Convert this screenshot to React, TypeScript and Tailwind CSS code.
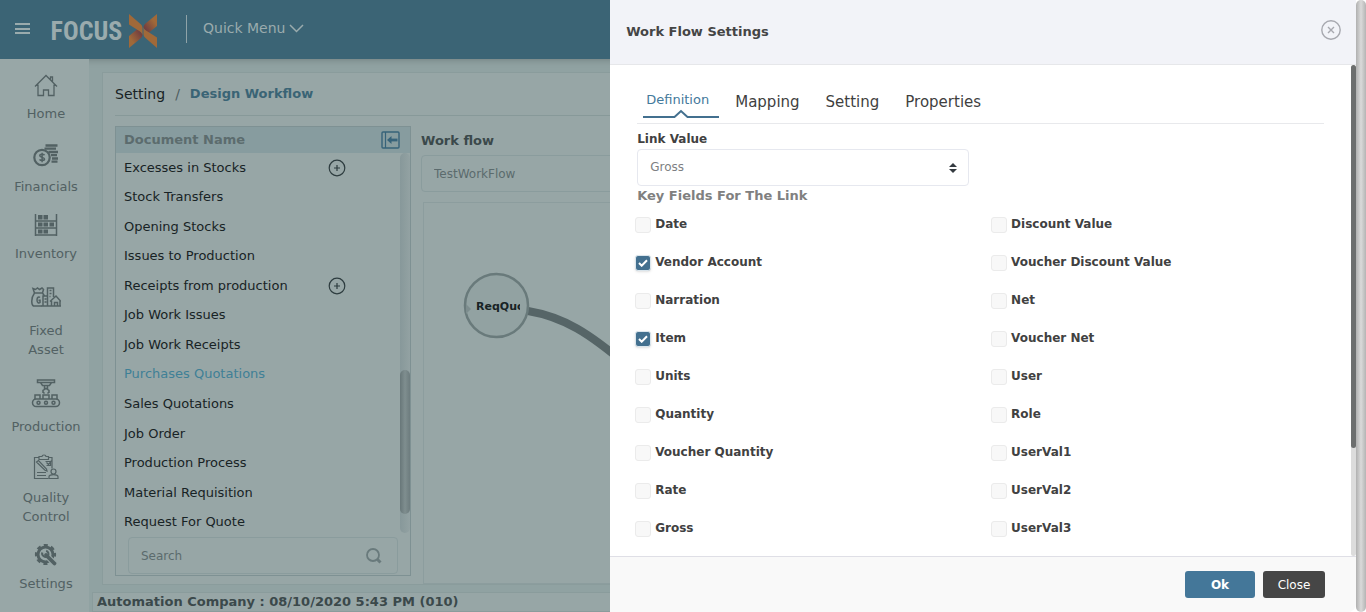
import { useState } from 'react';
import type { ReactNode } from 'react';

const documents = [
  { name: 'Excesses in Stocks', expandable: true },
  { name: 'Stock Transfers' },
  { name: 'Opening Stocks' },
  { name: 'Issues to Production' },
  { name: 'Receipts from production', expandable: true },
  { name: 'Job Work Issues' },
  { name: 'Job Work Receipts' },
  { name: 'Purchases Quotations', active: true },
  { name: 'Sales Quotations' },
  { name: 'Job Order' },
  { name: 'Production Process' },
  { name: 'Material Requisition' },
  { name: 'Request For Quote' },
];

const leftFields = ['Date', 'Vendor Account', 'Narration', 'Item', 'Units', 'Quantity', 'Voucher Quantity', 'Rate', 'Gross'];
const rightFields = ['Discount Value', 'Voucher Discount Value', 'Net', 'Voucher Net', 'User', 'Role', 'UserVal1', 'UserVal2', 'UserVal3'];

function HomeIcon() {
  return (
    <svg width="24" height="24" viewBox="0 0 24 24" fill="none" stroke="currentColor" strokeWidth="1.3" aria-hidden="true">
      <path d="M1 12.500 12 1.500l11 11M4 10.500v11h5.500v-5.500h5v5.500H20V10.500M16.500 5.500V3h2V8" />
    </svg>
  );
}

function FinancialsIcon() {
  return (
    <svg width="26" height="24" viewBox="0 0 26 24" fill="none" stroke="currentColor" aria-hidden="true">
      <path d="M12.500 2.500h12M11.500 5.700h11.500M15.500 9h9.500M18 12.200h6M19 15.500h6M18.500 18.700h6" strokeWidth="2.300" />
      <circle cx="9" cy="14.500" r="7.700" strokeWidth="2.200" />
      <path d="M11.500 12.200c-.5-1.200-4.700-1.500-4.700.5s4.700 1.300 4.700 3.400-4.300 1.800-4.900.3M9.100 9.700v9.600" strokeWidth="1.500" />
    </svg>
  );
}

function InventoryIcon() {
  return (
    <svg width="24" height="24" viewBox="0 0 24 24" fill="none" stroke="currentColor" aria-hidden="true">
      <path d="M1.500 1v22M22.500 1v22M1 8h22M1 15h22M1 22h22" strokeWidth="1.500" />
      <path d="M4 2h4.500v4.500H4zM9.500 2H14v4.500H9.500zM4 9.500h4.500v4H4zM9.500 9.500H14v4H9.500zM15.500 9.500H20v4h-4.500zM4 16.500h4.500v4H4zM9.500 16.500H14v4H9.500z" fill="currentColor" stroke="none" />
    </svg>
  );
}

function AssetIcon() {
  return (
    <svg width="30" height="22" viewBox="0 0 30 22" fill="none" stroke="currentColor" strokeWidth="1.500" aria-hidden="true">
      <path d="M3.500 7 2 2.500l2.500 1L6.500 2l2 1.500L11 2l1.500 1.500-1 3.500zM3.500 7C-.5 12.500.5 19 2.500 20h8M11.500 7l2 3M9 11.500c-1-1-3-.5-3 2.500s2 3.500 3 2.500v-2.200H7.500" />
      <path d="M12 20V10h4.500M16.500 20V2h6v9M18.500 4.500h2M18.500 7.500h2M18.500 10.500h1M13.500 13h2M13.500 16h2M19 15.500l6-5.500 5 5.500M20.500 15v5H29v-5M23.500 20v-3.500h3V20M10 20h20" />
    </svg>
  );
}

function ProductionIcon() {
  return (
    <svg width="30" height="30" viewBox="0 0 30 30" fill="none" stroke="currentColor" strokeWidth="1.500" aria-hidden="true">
      <path d="M6.500 2h17v2.500h-17zM9.500 4.500l2 3h7l2-3M13.500 7.500v3h3v-3M12 15v-2.500l3-2 3 2V15M12 14l1.500 1.500M18 14l-1.500 1.500M4 21v-4h5v4M12 21v-4h6v4M21 21v-4h5v4" />
      <rect x="1.500" y="21" width="27" height="7.500" rx="3.700" />
      <circle cx="7.500" cy="24.700" r="1.500" />
      <circle cx="15" cy="24.700" r="1.500" />
      <circle cx="22.500" cy="24.700" r="1.500" />
    </svg>
  );
}

function QualityIcon() {
  return (
    <svg width="26" height="26" viewBox="0 0 26 26" fill="none" stroke="currentColor" strokeWidth="1.200" aria-hidden="true">
      <path d="M6 3.500H1.500v21h14M15.500 3.500H19v11M6 5.500v-3h3C9 .5 13 .5 13 2.500h2.500v3zM3.500 8l2-1.500 8 8.500.5 2-2-.8zM12.500 7.500h5v4h-4M13.500 8.500l2 2 3-4M4 18.500h9M4 21.500h9" />
      <circle cx="20.500" cy="17.500" r="2.500" />
      <path d="M16 24.500v-1.700c0-3 9-3 9 0v1.700z" />
    </svg>
  );
}

function SettingsIcon() {
  return (
    <svg width="24" height="24" viewBox="0 0 24 24" fill="none" stroke="currentColor" aria-hidden="true">
      <circle cx="11.500" cy="11.500" r="7.500" strokeWidth="3" />
      <circle cx="11.500" cy="11.500" r="9.300" strokeWidth="2.600" strokeDasharray="4 3.304" strokeDashoffset="2" />
      <path d="M14 14l7 7" stroke="#98a7a7" strokeWidth="6" />
      <path d="M12 12l8.500 8.500" strokeWidth="3.800" strokeLinecap="round" />
      <path d="M8.200 9.500a3.600 3.600 0 0 0 5.500 3.800 3.600 3.600 0 0 0-1.500-5.600" strokeWidth="2" />
    </svg>
  );
}

const modules: { label: string; box: string; icon: ReactNode }[] = [
  { label: 'Home', box: 'h-6.5', icon: <HomeIcon /> },
  { label: 'Financials', box: 'h-[34px]', icon: <FinancialsIcon /> },
  { label: 'Inventory', box: 'h-7', icon: <InventoryIcon /> },
  { label: 'Fixed Asset', box: 'h-[38px]', icon: <AssetIcon /> },
  { label: 'Production', box: 'h-[38px]', icon: <ProductionIcon /> },
  { label: 'Quality Control', box: 'h-8', icon: <QualityIcon /> },
  { label: 'Settings', box: 'h-7', icon: <SettingsIcon /> },
];

function TopBar() {
  return (
    <header className="flex h-[59px] shrink-0 items-center bg-[#3b6475] pb-0.5 text-[#9aabad] shadow-md">
      <button type="button" aria-label="Toggle menu" className="ml-[15px] flex h-[11px] w-[15px] flex-col justify-between">
        <span className="h-0.5 w-full bg-current" />
        <span className="h-0.5 w-full bg-current" />
        <span className="h-0.5 w-full bg-current" />
      </button>
      <a href="#home" className="ml-5 flex items-center gap-1.5 pt-1">
        <span className="w-[73px] text-center font-['Liberation_Sans_Narrow','Roboto_Condensed','Liberation_Sans',sans-serif] text-[26px] leading-9 font-bold">FOCUS</span>
        <svg width="28" height="34" viewBox="0 0 28 34" aria-hidden="true">
          <defs>
            <linearGradient id="armTop" x1="0" x2="1" y1="1" y2="0">
              <stop offset="0.150" stopColor="#713d40" />
              <stop offset="0.700" stopColor="#a06939" />
            </linearGradient>
            <linearGradient id="armBottom" x1="1" x2="0" y1="0" y2="1">
              <stop offset="0.150" stopColor="#713d40" />
              <stop offset="0.700" stopColor="#a06939" />
            </linearGradient>
          </defs>
          <path d="M28 0v12l-8.500 7L14.500 14c0-2 .5-3 2-4.500z" fill="url(#armTop)" />
          <path d="M14.500 12.500c.3 2 1 3 2.500 4L28 23.500V34L16.500 24c-1.500-1.500-2-2.500-2-4.500z" fill="#a06939" />
          <path d="M0 34V22l8.500-7 5 5c0 2-.5 3-2 4.500z" fill="url(#armBottom)" />
          <path d="M13.500 21.500c-.3-2-1-3-2.500-4L0 10.500V0l11.500 10c1.500 1.500 2 2.500 2 4.500z" fill="#a06939" />
        </svg>
      </a>
      <span className="ml-[29px] h-7 w-px bg-[#8fa3a8]" />
      <button type="button" className="ml-4 flex items-center gap-1 text-[14px]">
        Quick Menu
        <svg width="15" height="9" viewBox="0 0 15 9" fill="none" stroke="currentColor" strokeWidth="1.500" aria-hidden="true">
          <path d="M1 1l6.500 6.500L14 1" />
        </svg>
      </button>
    </header>
  );
}

function Sidebar() {
  return (
    <nav className="flex w-[89px] shrink-0 flex-col items-center gap-[15px] bg-[#98a7a7] pt-3.5 pl-[3px] text-[#526163]">
      {modules.map((m) => (
        <a key={m.label} href="#module" className="flex w-20 flex-col items-center gap-[5px] text-center text-[13px] leading-[19px]">
          <span className={`flex items-center justify-center ${m.box}`}>{m.icon}</span>
          <span>{m.label.split(' ').map((word) => <span key={word} className="block">{word}</span>)}</span>
        </a>
      ))}
    </nav>
  );
}

function DocumentPanel() {
  return (
    <section className="flex w-[296px] shrink-0 flex-col border border-[#7e9193]">
      <div className="flex h-[26px] shrink-0 items-center justify-between bg-[#879c9f] pr-2.5 pl-2">
        <h2 className="text-[13px] font-bold text-[#5c6c6e]">Document Name</h2>
        <button type="button" aria-label="Collapse panel">
          <svg width="19" height="18" viewBox="0 0 19 18" fill="none" stroke="#37637a" aria-hidden="true">
            <rect x="1" y="1" width="17" height="16" rx="1" strokeWidth="1.400" />
            <path d="M4.500 1v16" strokeWidth="1.200" />
            <path d="M16.500 9H9" strokeWidth="2.800" />
            <path d="M6 9l4.500-4v8z" fill="#37637a" stroke="none" />
          </svg>
        </button>
      </div>
      <div className="flex min-h-0 flex-1 justify-between">
        <ul className="flex w-[230px] flex-col pl-2 text-[13px] leading-5 text-[#182325]">
          {documents.map((d) => (
            <li key={d.name} className={`flex flex-1 items-center justify-between ${d.active ? 'text-[#3f8096]' : ''}`}>
              <a href="#document">{d.name}</a>
              {d.expandable && (
                <button type="button" aria-label={`Expand ${d.name}`}>
                  <svg width="18" height="18" viewBox="0 0 18 18" fill="none" stroke="#2d3c3f" strokeWidth="1.200" aria-hidden="true">
                    <circle cx="9" cy="9" r="7.800" />
                    <path d="M9 6v6M6 9h6" />
                  </svg>
                </button>
              )}
            </li>
          ))}
        </ul>
        <div className="mb-1 flex w-2.5 flex-col rounded-full bg-linear-to-r from-[#87989a] via-[#8d9d9e] to-[#93a2a3]">
          <div className="grow-[216]" />
          <div className="grow-[144] rounded-full bg-linear-to-r from-[#687779] via-[#7f8e8f] to-[#6d7c7e]" />
          <div className="grow-[19]" />
        </div>
      </div>
      <label className="mx-3 mb-px flex h-[37px] shrink-0 items-center rounded border border-[#8a9c9d] pr-3.5 pl-3">
        <input type="text" placeholder="Search" aria-label="Search documents" className="min-w-0 flex-1 bg-transparent text-[12px] outline-none placeholder:text-[#5b6b6d]" />
        <svg width="18" height="18" viewBox="0 0 18 18" fill="none" stroke="#697a7c" aria-hidden="true">
          <circle cx="8" cy="8" r="6" strokeWidth="1.800" />
          <path d="M12.500 12.500l3 3" strokeWidth="3" />
        </svg>
      </label>
    </section>
  );
}

function WorkflowPanel() {
  return (
    <section className="flex min-w-0 flex-1 flex-col">
      <label htmlFor="workflow" className="mt-[5px] text-[13px] leading-[19px] font-bold text-[#3b494b]">Work flow</label>
      <input id="workflow" type="text" defaultValue="TestWorkFlow" className="mt-[5px] h-[37px] shrink-0 rounded border border-[#8a9c9d] bg-transparent px-3 text-[12px] text-[#5b6b6d] outline-none" />
      <div className="relative mt-2.5 -mb-2 ml-0.5 flex-1 overflow-hidden border border-[#8c9d9e]">
        <svg width="600" height="380" viewBox="0 0 600 380" className="absolute top-0 left-0" fill="none" aria-hidden="true">
          <path d="M104 108C140 114 165 130 205 164" stroke="#566567" strokeWidth="8" />
          <circle cx="72.500" cy="102.500" r="31.500" fill="#92a2a2" stroke="#697a7b" strokeWidth="2.500" />
          <path d="M42 101l5 5-5 5z" fill="#7d8d8e" />
        </svg>
        <span className="absolute top-24 left-[52px] w-11 overflow-hidden text-[11px] leading-4 font-bold text-[#182325]">ReqQuote</span>
      </div>
    </section>
  );
}

function FieldCheckbox({ label, initial }: { label: string; initial: boolean }) {
  const [checked, setChecked] = useState(initial);
  return (
    <label className="flex h-[38px] items-start gap-1 text-[12px] leading-[18px] font-bold text-[#414141]">
      <span className="mt-0.5 grid size-4 shrink-0 place-items-center">
        <input
          type="checkbox"
          checked={checked}
          onChange={(e) => setChecked(e.target.checked)}
          className="col-start-1 row-start-1 size-4 appearance-none rounded-[3px] border border-[#ebebeb] bg-[#f8f8f8] checked:border-[#dbe6ed] checked:bg-[#43708f] checked:shadow"
        />
        {checked && (
          <svg width="10" height="8" viewBox="0 0 10 8" fill="none" stroke="white" strokeWidth="2" className="pointer-events-none z-10 col-start-1 row-start-1" aria-hidden="true">
            <path d="M1 4l2.700 2.700L9 1.200" />
          </svg>
        )}
      </span>
      {label}
    </label>
  );
}

function SettingsDrawer() {
  return (
    <aside role="dialog" aria-label="Work Flow Settings" className="absolute inset-y-0 right-0 flex w-[55%] flex-col bg-white">
      <header className="flex h-[65px] shrink-0 items-center justify-between border-b border-[#e6e7ea] bg-[#f2f3f8] pr-[15px] pb-1 pl-4">
        <h1 className="pt-1 text-[13px] font-bold text-[#454545]">Work Flow Settings</h1>
        <button type="button" aria-label="Close settings">
          <svg width="20" height="20" viewBox="0 0 20 20" fill="none" stroke="#a7a8af" strokeWidth="1.400" aria-hidden="true">
            <circle cx="10" cy="10" r="9.200" />
            <path d="M7 7l6 6M13 7l-6 6" />
          </svg>
        </button>
      </header>
      <div className="flex min-h-0 flex-1">
        <div className="min-w-0 flex-1 overflow-hidden">
          <div role="tablist" className="mx-[27px] mt-[25px] flex h-[34px] items-start gap-[26px] border-b border-[#e8e9ec] text-[15px] leading-6 text-[#3f3f3f]">
            <button role="tab" aria-selected="true" type="button" className="-mr-2.5 ml-1.5 w-19 text-left text-[13px] leading-[19px] text-[#43799b]">
              <span className="block pl-[3px]">Definition</span>
              <svg width="76" height="9" viewBox="0 0 76 9" fill="none" stroke="#43708f" strokeWidth="2" className="block" aria-hidden="true">
                <path d="M0 8h31.500L38 2l6.500 6H76" />
              </svg>
            </button>
            <button role="tab" type="button">Mapping</button>
            <button role="tab" type="button">Setting</button>
            <button role="tab" type="button">Properties</button>
          </div>
          <div className="mx-[27px] mt-1.5 flex flex-col">
            <label htmlFor="linkValue" className="text-[12px] leading-[19px] font-bold text-[#414141]">Link Value</label>
            <div className="grid w-[332px] max-w-full items-center">
              <select id="linkValue" defaultValue="Gross" className="col-start-1 row-start-1 h-[37px] appearance-none rounded border border-[#e6e8ef] bg-white px-3 pb-0.5 text-[12px] text-[#7d7f82]">
                <option>Gross</option>
                <option>Net</option>
              </select>
              <svg width="8" height="10" viewBox="0 0 8 10" fill="#343a40" className="pointer-events-none col-start-1 row-start-1 mr-3 justify-self-end" aria-hidden="true">
                <path d="M4 0l4 4H0zM4 10L0 6h8z" />
              </svg>
            </div>
            <h2 className="text-[13px] leading-[19px] font-bold text-[#808080]">Key Fields For The Link</h2>
          </div>
          <div className="mt-2.5 mr-1 ml-[25px] grid grid-cols-2">
            <div>{leftFields.map((f) => <FieldCheckbox key={f} label={f} initial={f === 'Vendor Account' || f === 'Item'} />)}</div>
            <div>{rightFields.map((f) => <FieldCheckbox key={f} label={f} initial={false} />)}</div>
          </div>
        </div>
        <div className="flex w-[5px] flex-col rounded bg-[#dcdcdc]">
          <div className="h-[78%] rounded bg-[#6c6e6e]" />
        </div>
      </div>
      <footer className="flex h-14 shrink-0 items-center justify-end gap-2 rounded-br-lg border-t border-[#dfdfe6] bg-[#f9f9f9] pr-[31px]">
        <button type="button" className="h-[27px] w-[70px] rounded-[3px] bg-[#447799] text-[12px] font-bold text-white">Ok</button>
        <button type="button" className="h-[27px] w-[62px] rounded-[3px] bg-[#464646] text-[12px] text-white">Close</button>
      </footer>
    </aside>
  );
}

export default function App() {
  return (
    <div className="flex h-screen font-['Verdana','DejaVu_Sans',sans-serif]">
      <div className="relative flex min-w-0 flex-1 flex-col overflow-hidden bg-[#90a2a2]">
        <TopBar />
        <div className="flex min-h-0 flex-1">
          <Sidebar />
          <div className="flex min-w-0 flex-1 flex-col">
            <main className="mt-[13px] mr-3 ml-[13px] flex min-h-0 flex-1 flex-col border border-[#8a9c9c] bg-[#97a6a6] px-3 pb-2">
              <nav aria-label="Breadcrumb" className="flex h-[43px] shrink-0 items-center gap-2.5 border-b border-[#879999] text-[14px]">
                <a href="#setting" className="text-[#182325]">Setting</a>
                <span className="text-[#4d5c5e]">/</span>
                <span className="text-[13px] font-bold text-[#3a6475]">Design Workflow</span>
              </nav>
              <div className="flex min-h-0 flex-1 gap-2.5 pt-2.5">
                <DocumentPanel />
                <WorkflowPanel />
              </div>
            </main>
            <footer className="mt-[7px] ml-[3px] flex h-5 shrink-0 items-center border border-[#8a9c9c] bg-[#97a6a6] pl-1 text-[13px] font-bold text-[#3b494b]">
              Automation Company : 08/10/2020 5:43 PM (010)
            </footer>
          </div>
        </div>
        <SettingsDrawer />
      </div>
      <div className="w-2.5 shrink-0 bg-white">
        <div className="h-full rounded-full bg-linear-to-r from-[#b0b0b0] via-[#dadada] to-[#b4b4b4]" />
      </div>
    </div>
  );
}
